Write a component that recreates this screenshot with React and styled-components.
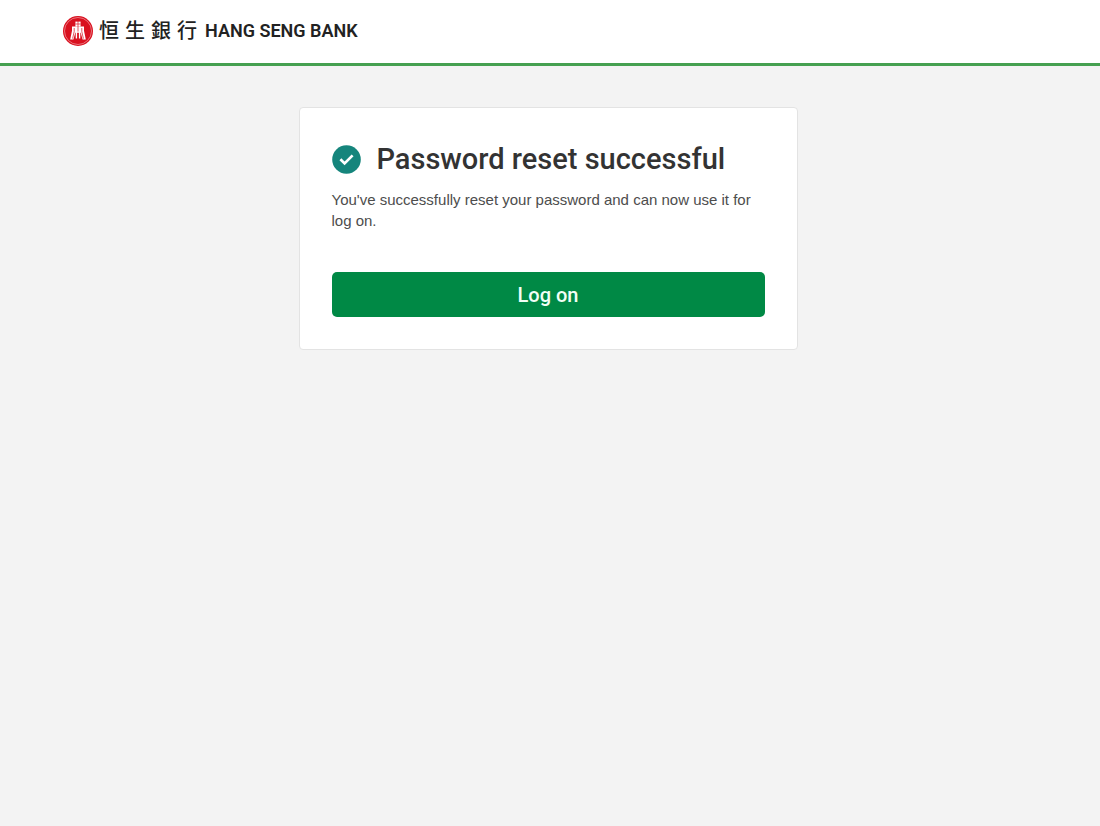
import React from 'react';
import styled, { createGlobalStyle } from 'styled-components';

const GlobalStyle = createGlobalStyle`
    * {
        box-sizing: border-box;
    }

    body {
        margin: 0;
        background: #f3f3f3;
        color: #333;
        font-family: "Liberation Sans", Arial, sans-serif;
    }
`;

const Header = styled.header`
    display: flex;
    align-items: center;
    height: 66px;
    padding: 0 63px 2px;
    background: #fff;
    border-bottom: 3px solid #45a050;
`;

const Brand = styled.a`
    display: flex;
    align-items: center;
    color: #222;
    text-decoration: none;
`;

const Emblem = styled.svg`
    width: 30px;
    height: 30px;
    flex: none;
`;

const ChineseName = styled.span`
    display: flex;
    gap: 6px;
    margin: 0 8px 2px 6px;
    font-family: "Noto Sans CJK TC", sans-serif;
    font-size: 20px;
    font-weight: 500;
    line-height: 24px;
`;

const EnglishName = styled.span`
    font-family: Roboto, sans-serif;
    font-size: 18px;
    font-weight: 600;
    line-height: 24px;
`;

const Main = styled.main`
    padding: 41px 20px 40px 16px;
`;

const Card = styled.section`
    max-width: 499px;
    margin: 0 auto;
    padding: 31px 32px 32px;
    background: #fff;
    border: 1px solid #e3e3e3;
    border-radius: 4px;
`;

const TitleRow = styled.div`
    display: flex;
    align-items: center;
    gap: 16px;
`;

const StatusIcon = styled.svg`
    width: 29px;
    height: 29px;
    flex: none;
`;

const Title = styled.h1`
    margin: 0;
    font-family: Roboto, sans-serif;
    font-size: 29px;
    font-weight: 500;
    line-height: 40px;
`;

const Message = styled.p`
    margin: 10px 0 41px;
    color: #4d4d4d;
    font-size: 15px;
    line-height: 21px;
`;

const Button = styled.button`
    display: block;
    width: 100%;
    height: 45px;
    padding: 0;
    border: 0;
    border-radius: 5px;
    background: #008945;
    color: #f2fff6;
    font-family: Roboto, sans-serif;
    font-size: 20px;
    font-weight: 500;
    cursor: pointer;
`;

const bankName = ['恒', '生', '銀', '行'];

const BankEmblem = () => (
    <Emblem viewBox="0 0 30 30" aria-hidden="true">
        <circle cx="15" cy="15" r="15" fill="#d9111f" />
        <circle cx="15" cy="15" r="13.5" fill="none" stroke="#f5b5ba" strokeWidth="0.6" />
        {/* spade coin: head, shoulders, then the two legs */}
        <path fill="#fff" d="M12.4 5.6h5.2v5h-5.2z" />
        <path
            fill="#fff"
            d="M9 10.4h12v4.4l1.8 8.6h-3.2l-1.9-6.6h-5.4l-1.9 6.6H7.2L9 14.8z"
        />
        <path fill="none" stroke="#fff" strokeWidth="1.4" d="M13.4 16v6.6M16.6 16v6.6" />
        <path
            fill="none"
            stroke="#d9111f"
            strokeWidth="0.7"
            d="M15 4.6v11M11.2 12v3.6l-1.6 7M18.8 12v3.6l1.6 7M12.4 8h5.2"
        />
    </Emblem>
);

const App = () => {
    return (
        <>
            <GlobalStyle />
            <Header>
                <Brand href="#">
                    <BankEmblem />
                    <ChineseName lang="zh-Hant">
                        {bankName.map((character) => (
                            <span key={character}>{character}</span>
                        ))}
                    </ChineseName>
                    <EnglishName>HANG SENG BANK</EnglishName>
                </Brand>
            </Header>
            <Main>
                <Card>
                    <TitleRow>
                        <StatusIcon viewBox="0 0 29 29" aria-hidden="true">
                            <circle cx="14.5" cy="14.5" r="14.3" fill="#15857c" />
                            <path d="M8.4 14.2l4.2 4.2 8-8" fill="none" stroke="#fff" strokeWidth="2.7" />
                        </StatusIcon>
                        <Title>Password reset successful</Title>
                    </TitleRow>
                    <Message>
                        You've successfully reset your password and can now use it for log on.
                    </Message>
                    <Button type="button">Log on</Button>
                </Card>
            </Main>
        </>
    );
};

export default App;
